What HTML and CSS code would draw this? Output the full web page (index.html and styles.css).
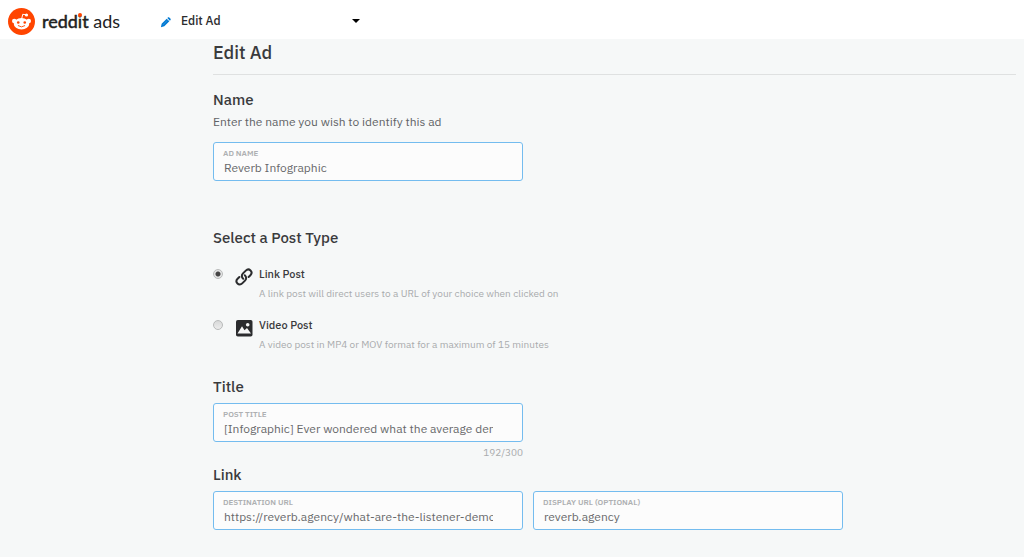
FILE: index.html
```html
<!DOCTYPE html>
<html lang="en">
<head>
<meta charset="utf-8">
<meta name="viewport" content="width=device-width, initial-scale=1">
<title>Edit Ad</title>
<link rel="stylesheet" href="styles.css">
</head>
<body>
<header class="topbar">
  <a class="brand" href="#">
    <svg class="brand-mark" viewBox="0 0 54 54" aria-hidden="true">
      <circle cx="27" cy="27" r="27" fill="#ff4500"/>
      <path d="M27 23 L29.5 12.500 L37 14" fill="none" stroke="#fff" stroke-width="2"/>
      <circle cx="37" cy="14" r="3.200" fill="#fff"/>
      <circle cx="12.500" cy="26" r="4.500" fill="#fff"/>
      <circle cx="41.500" cy="26" r="4.500" fill="#fff"/>
      <ellipse cx="27" cy="31.500" rx="15.500" ry="11.500" fill="#fff"/>
      <circle cx="20.500" cy="29" r="2.600" fill="#ff4500"/>
      <circle cx="33.500" cy="29" r="2.600" fill="#ff4500"/>
      <path d="M20.500 35.500 Q27 40.500 33.500 35.500" fill="none" stroke="#ff4500" stroke-width="1.800" stroke-linecap="round"/>
    </svg>
    <span class="brand-text"><b class="brand-name">redd<span class="brand-i">i</span>t</b> ads</span>
  </a>
  <label class="mode">
    <svg class="mode-pencil" viewBox="0 0 12 12" aria-hidden="true">
      <path d="M1.800 7.300 L7.300 1.800 L10.200 4.700 L4.700 10.200 L1 11.200 Z M8 1.200 L8.900 .4 Q9.500 0 10.100 .5 L11.500 1.900 Q12 2.500 11.500 3.200 L10.800 4 Z" fill="#0079d3"/>
      <path d="M3 8.800 L8 3.800" stroke="#7fbdea" stroke-width=".4"/>
    </svg>
    <select class="mode-select" aria-label="Mode"><option>Edit Ad</option></select>
    <svg class="mode-caret" viewBox="0 0 8 4" aria-hidden="true"><path d="M0 0H8L4 4Z" fill="#000"/></svg>
  </label>
</header>
<main class="page">
  <h1 class="page-title">Edit Ad</h1>
  <form>
    <section class="section section-name">
      <h2 class="heading">Name</h2>
      <p class="hint">Enter the name you wish to identify this ad</p>
      <div class="fields fields-spaced">
        <label class="field"><span class="field-label">AD NAME</span><input class="field-input" type="text" value="Reverb Infographic"></label>
      </div>
    </section>
    <section class="section section-type">
      <h2 class="heading">Select a Post Type</h2>
      <div class="options">
        <label class="option">
          <input class="radio" type="radio" name="type" checked>
          <svg class="option-icon" viewBox="0 0 18 18" aria-hidden="true">
            <g fill="none" stroke="#2b2c2e" stroke-width="2" stroke-linecap="round">
              <path d="M8.200 10.800 C6.300 9.100 6.500 6.900 8 5.400 L10.800 2.600 C12.200 1.200 14.200 1.200 15.500 2.500 C16.800 3.800 16.800 5.800 15.400 7.200 L13.600 9"/>
              <path d="M9.800 7.200 C11.700 8.900 11.500 11.100 10 12.600 L7.200 15.400 C5.800 16.800 3.800 16.800 2.500 15.500 C1.200 14.200 1.200 12.200 2.600 10.800 L4.400 9"/>
            </g>
          </svg>
          <span class="option-body"><span class="option-title">Link Post</span><span class="option-text">A link post will direct users to a URL of your choice when clicked on</span></span>
        </label>
        <label class="option">
          <input class="radio" type="radio" name="type">
          <svg class="option-icon" viewBox="0 0 18 18" aria-hidden="true">
            <rect x="1" y="1" width="16.500" height="16.500" rx="1.800" fill="#2b2c2e"/>
            <path d="M2.500 14.500 L7 7.300 L9.500 11.200 L12 9 L16 14.500 Z" fill="#f6f7f7"/>
            <circle cx="12.700" cy="5.800" r="1.800" fill="#f6f7f7"/>
          </svg>
          <span class="option-body"><span class="option-title">Video Post</span><span class="option-text">A video post in MP4 or MOV format for a maximum of 15 minutes</span></span>
        </label>
      </div>
    </section>
    <section class="section section-title">
      <h2 class="heading">Title</h2>
      <div class="fields">
        <div class="counted">
          <label class="field"><span class="field-label">POST TITLE</span><input class="field-input" type="text" value="[Infographic] Ever wondered what the average demographic of a podcast listener is?"></label>
          <span class="counter">192/300</span>
        </div>
      </div>
    </section>
    <section class="section section-link">
      <h2 class="heading">Link</h2>
      <div class="fields">
        <label class="field"><span class="field-label">DESTINATION URL</span><input class="field-input" type="text" value="https://reverb.agency/what-are-the-listener-demographics"></label>
        <label class="field"><span class="field-label">DISPLAY URL (OPTIONAL)</span><input class="field-input" type="text" value="reverb.agency"></label>
      </div>
    </section>
  </form>
</main>
</body>
</html>
```
FILE: styles.css
```css
* { box-sizing: border-box; }
body {
  margin: 0;
  min-height: 100vh;
  background: #f6f8f8;
  color: #3a3b3d;
  font-family: "IBM Plex Sans", Roboto, "Liberation Sans", sans-serif;
  font-size: 12px;
}
.topbar {
  display: flex;
  align-items: center;
  gap: 40px;
  min-height: 39px;
  padding: 3px 8px 0;
  background: #fff;
}
.brand {
  display: flex;
  align-items: center;
  gap: 7px;
  color: #3a3b3d;
  text-decoration: none;
}
.brand-mark { width: 27px; height: 27px; }
.brand-text { font: 400 18px/24px Lato, sans-serif; color: #222; }
.brand-name { font-weight: 400; -webkit-text-stroke: 0.5px #222; }
.brand-i { position: relative; }
.brand-i::after {
  content: "";
  position: absolute;
  left: 0;
  top: 3px;
  width: 4px;
  height: 4px;
  border-radius: 50%;
  background: #ff4500;
}
.mode {
  display: flex;
  align-items: center;
  width: 200px;
}
.mode-pencil { width: 11px; height: 11px; margin: 3px 10px 0 0; }
.mode-select {
  flex: 1;
  appearance: none;
  border: 0;
  padding: 0;
  background: transparent;
  color: #2b2c2e;
  font: 500 12px/20px "IBM Plex Sans", Roboto, sans-serif;
}
.mode-caret { width: 8px; height: 4px; }
.page { padding: 0 8px 20px 213px; }
.page-title {
  margin: 0;
  padding-bottom: 7px;
  border-bottom: 1px solid #dfe1e1;
  font-size: 18px;
  line-height: 28px;
  font-weight: 500;
}
.section-name { margin-top: 13px; }
.section-type { margin-top: 45px; }
.section-title { margin-top: 20px; }
.section-link { margin-top: 2px; }
.heading {
  margin: 0;
  font-size: 15px;
  line-height: 24px;
  font-weight: 500;
}
.hint { margin: 0; line-height: 20px; color: #616366; }
.fields {
  display: flex;
  flex-wrap: wrap;
  gap: 10px;
  margin-top: 4px;
}
.fields-spaced { margin-top: 10px; }
.field {
  display: flex;
  flex-direction: column;
  width: 310px;
  padding: 5px 29px 4px 9px;
  border: 1px solid #74bcef;
  border-radius: 3px;
  background: #fcfcfc;
}
.field-label {
  color: #aeb0b2;
  font-size: 8px;
  line-height: 10px;
  font-weight: 600;
}
.field-input {
  width: 100%;
  height: 18px;
  padding: 0 0 0 1px;
  border: 0;
  outline: 0;
  background: transparent;
  color: #68696b;
  font: inherit;
}
.counted { display: flex; flex-direction: column; gap: 3px; }
.counter {
  align-self: flex-end;
  color: #a9abad;
  font-size: 10px;
  line-height: 16px;
}
.options { display: grid; gap: 11px; margin-top: 14px; }
.option { display: flex; align-items: flex-start; }
.radio {
  appearance: none;
  width: 10px;
  height: 10px;
  margin: 5px 12px 0 0;
  border: 1px solid #b9bbbb;
  border-radius: 50%;
  background: linear-gradient(#d8d9d9, #ececec);
}
.radio:checked { background: radial-gradient(circle, #454545 0 2px, #e4e5e5 3px); }
.option-icon { width: 18px; height: 18px; margin: 4px 6px 0 0; }
.option-body { display: flex; flex-direction: column; line-height: 20px; }
.option-title { font-size: 11px; font-weight: 500; }
.option-text { color: #a9abad; font-size: 10px; }
```
